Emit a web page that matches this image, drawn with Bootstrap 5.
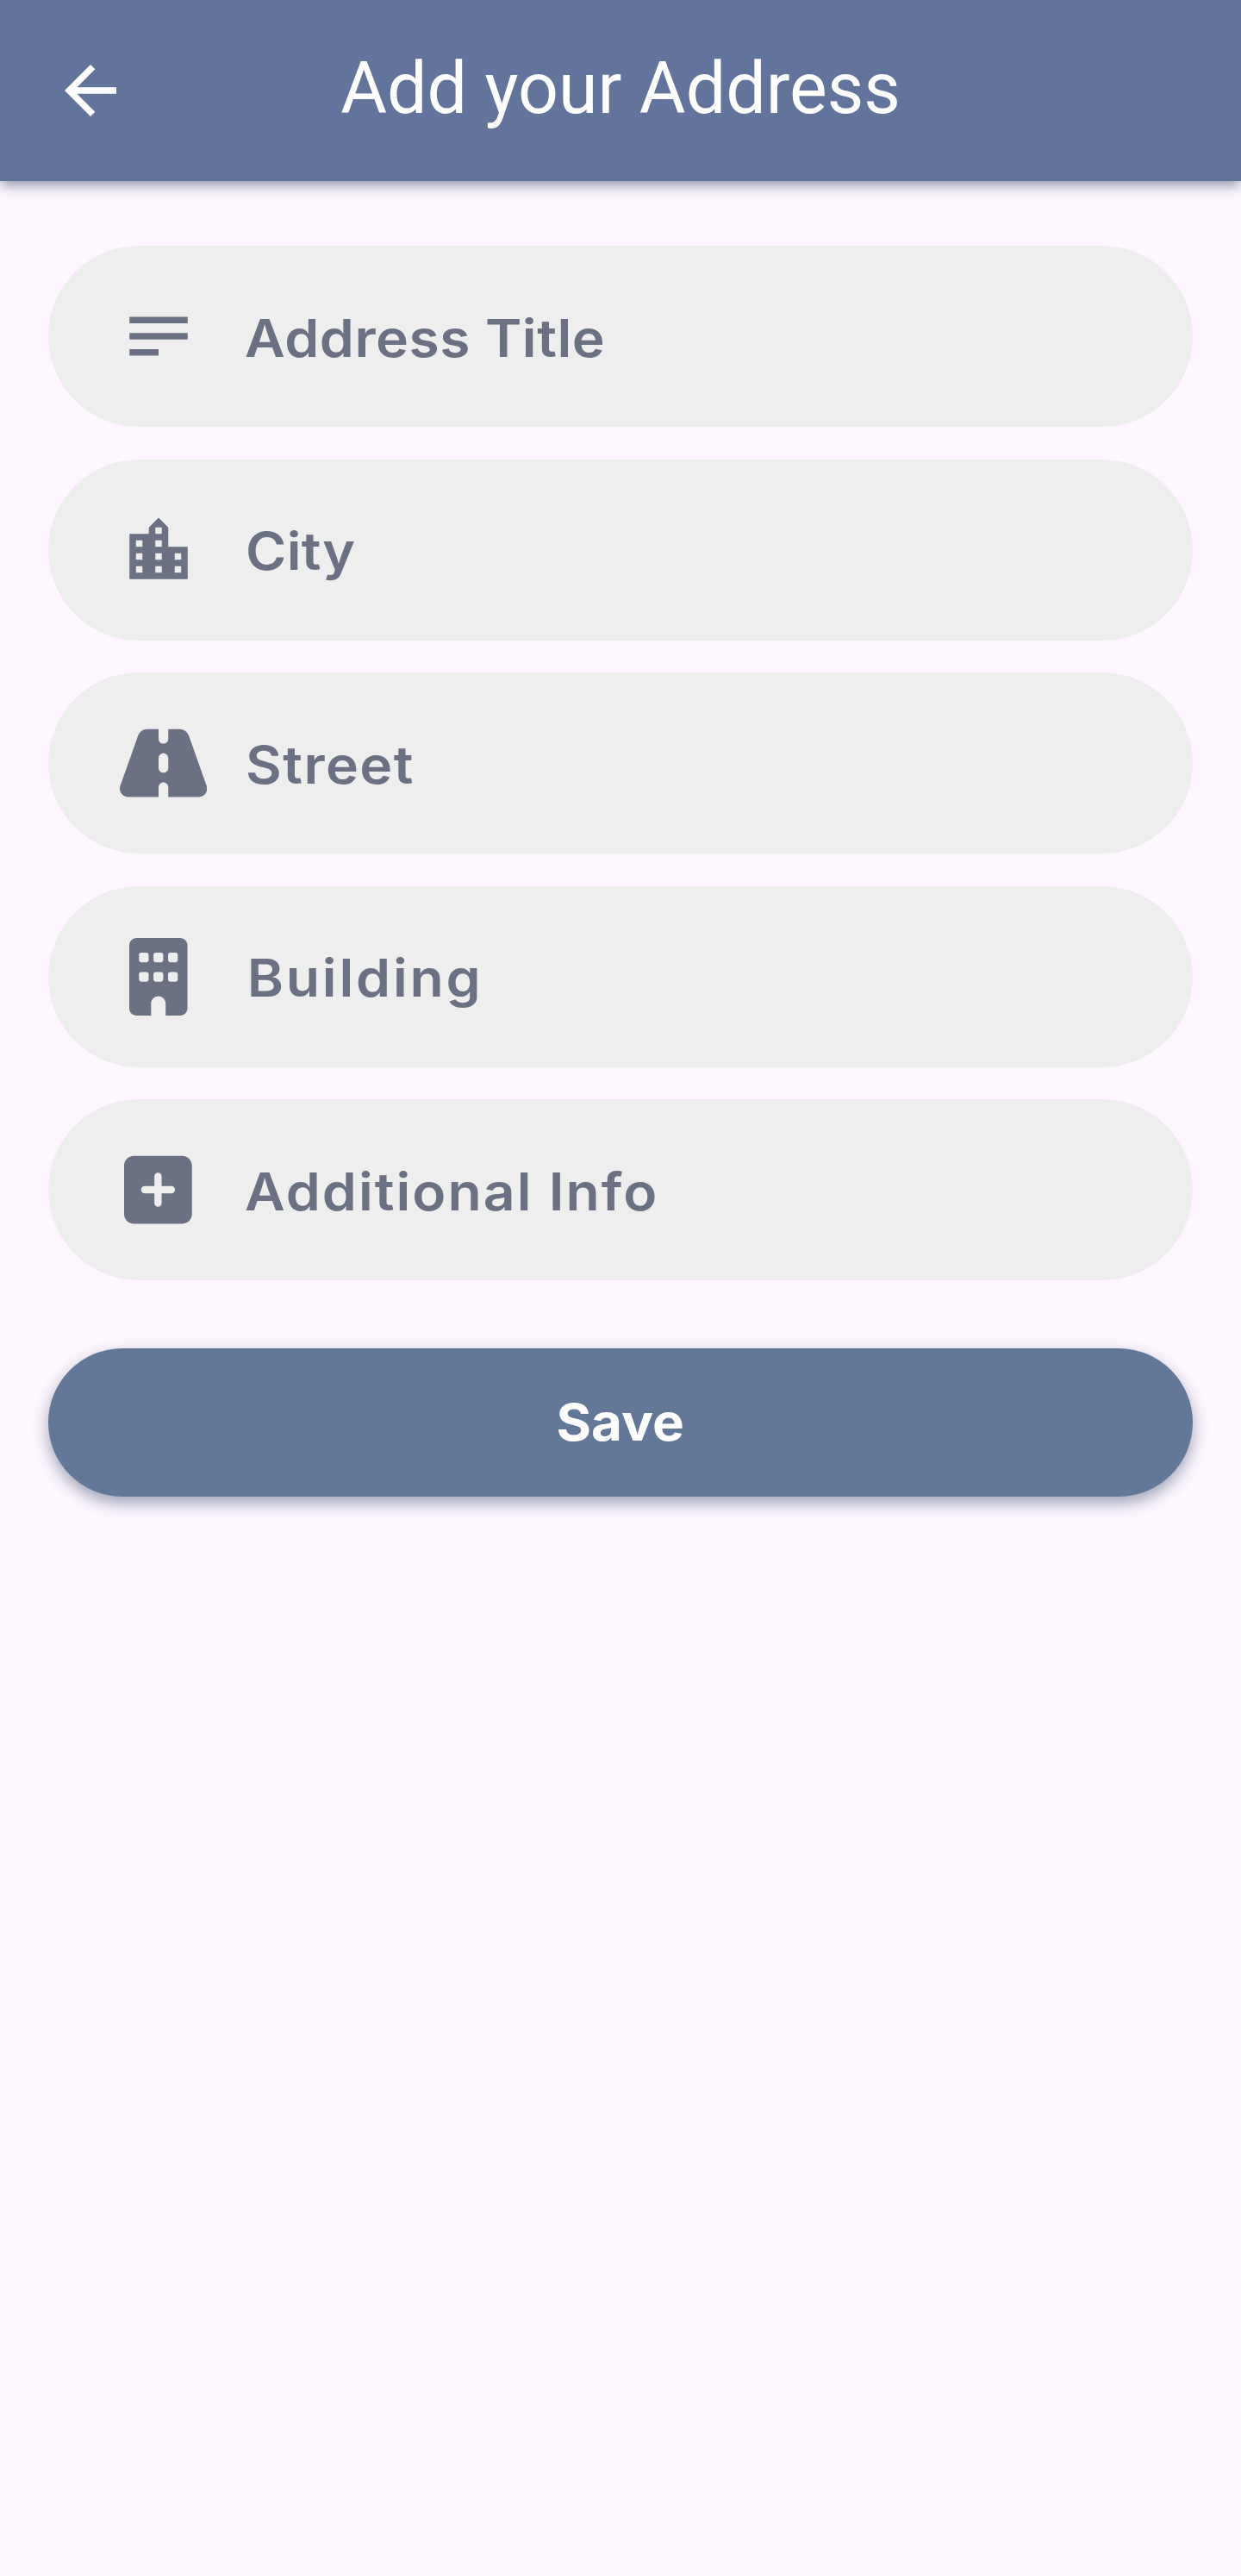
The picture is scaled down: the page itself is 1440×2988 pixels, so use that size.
<!DOCTYPE html>
<html lang="en">
<head>
<meta charset="utf-8">
<meta name="viewport" content="width=device-width, initial-scale=1">
<title>Add your Address</title>
<link href="https://cdn.jsdelivr.net/npm/bootstrap@5.3.0/dist/css/bootstrap.min.css" rel="stylesheet">
<style>
  body { background: #fef7ff; min-height: 2988px; }
  .app-bar { height: 210px; background: #62749b; box-shadow: 0 7px 13px -1px rgba(70, 88, 120, .55); padding: 0 60px; }
  .back-btn, .bar-spacer { width: 90px; height: 90px; flex: none; }
  .app-title { font: 400 82.5px/96px Roboto, sans-serif; padding-bottom: 5px; white-space: nowrap; }
  .address-form { padding: 75px 56.25px 0; gap: 37.5px; }
  .field { height: 210px; background: #eee; border-radius: 105px; color: #6b7183; padding-left: 82.5px; }
  .field-icon { width: 90px; height: 90px; flex: none; margin-right: 55px; }
  .field-icon svg { flex: none; height: 90px; }
  .field-label { font: 600 60px/72px Inter, sans-serif; padding-top: 3px; white-space: nowrap; transform: scaleX(1.07); transform-origin: 0 50%; }
  .ls-title { letter-spacing: .5px; }
  .ls-city { letter-spacing: .3px; padding-left: 1px; }
  .ls-street { letter-spacing: 1.35px; padding-left: 1px; }
  .ls-building { letter-spacing: 2.6px; padding-left: 2.5px; }
  .ls-info { letter-spacing: 1.9px; }
  .save-btn, .save-btn:hover { height: 172.5px; margin-top: 41.25px; border: 0; border-radius: 86.25px; background: #637799; color: #fff;
    font: 700 59px/72px Inter, sans-serif; padding: 0;
    box-shadow: 0 8px 16px rgba(70, 88, 120, .42), 0 6px 24px rgba(70, 88, 120, .13); }
  .save-label { display: inline-block; transform: scaleX(1.05); }
</style>
</head>
<body>
<header class="app-bar d-flex align-items-center justify-content-between text-white">
  <a href="#" class="back-btn text-white d-block" aria-label="Back">
    <svg class="d-block" width="90" height="90" viewBox="0 0 24 24" fill="currentColor"><path d="M20 11H7.83l5.59-5.59L12 4l-8 8 8 8 1.41-1.41L7.83 13H20v-2z"/></svg>
  </a>
  <h1 class="app-title m-0">Add your Address</h1>
  <span class="bar-spacer"></span>
</header>

<main class="address-form d-flex flex-column">
  <div class="field d-flex align-items-center">
    <span class="field-icon d-flex justify-content-center"><svg viewBox="0 0 24 24" fill="currentColor"><path d="M3 6h18v2H3zM3 11h18v2H3zM3 16h9v2H3z"/></svg></span>
    <span class="field-label ls-title">Address Title</span>
  </div>
  <div class="field d-flex align-items-center">
    <span class="field-icon d-flex justify-content-center"><svg viewBox="0 0 24 24" fill="currentColor"><path d="M15 11V5l-3-3-3 3v2H3v14h18V11h-6zm-8 8H5v-2h2v2zm0-4H5v-2h2v2zm0-4H5V9h2v2zm6 8h-2v-2h2v2zm0-4h-2v-2h2v2zm0-4h-2V9h2v2zm0-4h-2V5h2v2zm6 12h-2v-2h2v2zm0-4h-2v-2h2v2z"/></svg></span>
    <span class="field-label ls-city">City</span>
  </div>
  <div class="field d-flex align-items-center">
    <span class="field-icon d-flex justify-content-start"><svg viewBox="0 0 576 512" fill="currentColor"><path d="M256 32H181.2c-27.1 0-51.3 17.1-60.3 42.6L3.1 407.2C1.1 413 0 419.2 0 425.4C0 455.5 24.5 480 54.6 480H256V416c0-17.7 14.3-32 32-32s32 14.3 32 32v64H521.4c30.2 0 54.6-24.5 54.6-54.6c0-6.2-1.1-12.4-3.1-18.2L455.1 74.6C446 49.1 421.9 32 394.8 32H320V96c0 17.7-14.3 32-32 32s-32-14.3-32-32V32zm64 192v64c0 17.7-14.3 32-32 32s-32-14.3-32-32V224c0-17.7 14.3-32 32-32s32 14.3 32 32z"/></svg></span>
    <span class="field-label ls-street">Street</span>
  </div>
  <div class="field d-flex align-items-center">
    <span class="field-icon d-flex justify-content-center"><svg viewBox="0 0 384 512" fill="currentColor"><path d="M48 0C21.5 0 0 21.5 0 48V464c0 26.5 21.5 48 48 48h96V432c0-26.5 21.5-48 48-48s48 21.5 48 48v80h96c26.5 0 48-21.5 48-48V48c0-26.5-21.5-48-48-48H48z"/><g fill="#eee"><rect x="64" y="96" width="64" height="64" rx="16"/><rect x="160" y="96" width="64" height="64" rx="16"/><rect x="256" y="96" width="64" height="64" rx="16"/><rect x="64" y="224" width="64" height="64" rx="16"/><rect x="160" y="224" width="64" height="64" rx="16"/><rect x="256" y="224" width="64" height="64" rx="16"/></g></svg></span>
    <span class="field-label ls-building">Building</span>
  </div>
  <div class="field d-flex align-items-center">
    <span class="field-icon d-flex justify-content-center"><svg viewBox="0 0 448 512" fill="currentColor"><path d="M64 32C28.7 32 0 60.7 0 96V416c0 35.3 28.7 64 64 64H384c35.3 0 64-28.7 64-64V96c0-35.3-28.7-64-64-64H64zM200 344V280H136c-13.3 0-24-10.7-24-24s10.7-24 24-24h64V168c0-13.3 10.7-24 24-24s24 10.7 24 24v64h64c13.3 0 24 10.7 24 24s-10.7 24-24 24H248v64c0 13.3-10.7 24-24 24s-24-10.7-24-24z"/></svg></span>
    <span class="field-label ls-info">Additional Info</span>
  </div>
  <button type="button" class="btn save-btn w-100"><span class="save-label">Save</span></button>
</main>
<script src="https://cdn.jsdelivr.net/npm/bootstrap@5.3.0/dist/js/bootstrap.bundle.min.js"></script>
</body>
</html>
